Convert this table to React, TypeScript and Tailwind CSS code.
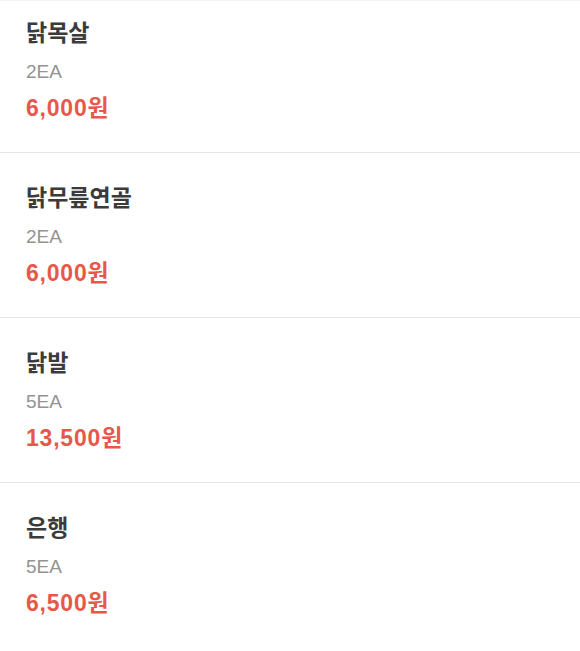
import { Fragment } from "react";

type Item = { name: string; qty: string; price: string };

const items: Item[] = [
  { name: "닭목살", qty: "2EA", price: "6,000원" },
  { name: "닭무릎연골", qty: "2EA", price: "6,000원" },
  { name: "닭발", qty: "5EA", price: "13,500원" },
  { name: "은행", qty: "5EA", price: "6,500원" },
];

export default function App() {
  return (
    <main
      className="h-[651px] w-[580px] overflow-hidden border-t border-[#f4f4f4] bg-white"
      style={{ fontFamily: '"Liberation Sans", "Noto Sans CJK KR", sans-serif' }}
    >
      <ul className="-mt-[13px]">
        {items.map((item, i) => (
          <Fragment key={item.name}>
            {i > 0 && <li aria-hidden className="h-px bg-[#e6e6e6]" />}
            <li className="flex h-[164px] flex-col px-[26px] pt-[29px]">
              <p className="text-[23px] font-bold leading-[32px] text-[#3b3b3b]">{item.name}</p>
              <p className="mt-[10px] text-[19px] leading-[26px] text-[#939393]">{item.qty}</p>
              <p className="mt-[9px] text-[23px] font-bold leading-[28px] tracking-[0.8px] text-[#e8584a]">
                {item.price}
              </p>
            </li>
          </Fragment>
        ))}
      </ul>
    </main>
  );
}
